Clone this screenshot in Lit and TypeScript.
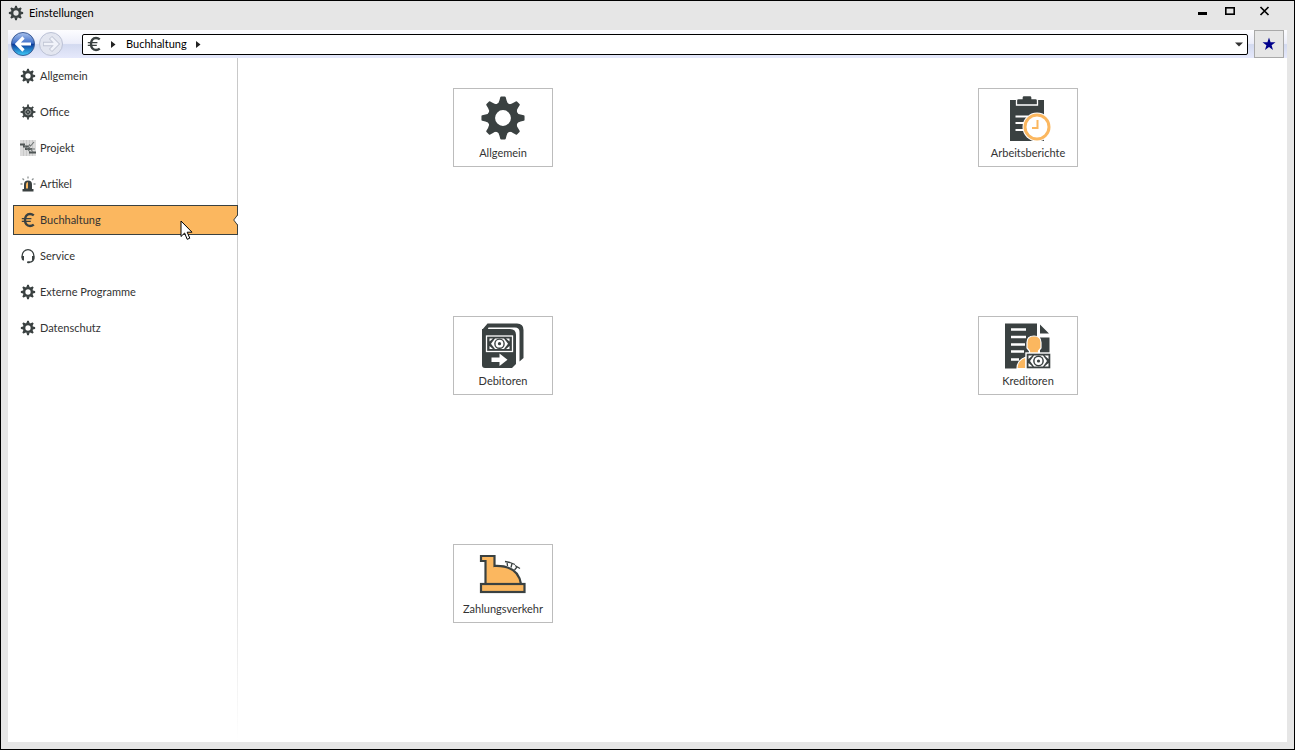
import { LitElement, html, css, svg } from "lit";
import { customElement, property, state } from "lit/decorators.js";

const angles = [0, 45, 90, 135, 180, 225, 270, 315];

const gear = svg`
  <circle r="11.8" fill="none" stroke="currentColor" stroke-width="7.4" />
  ${angles.map(
    (a) => svg`<path transform="rotate(${a})" fill="currentColor"
      d="M-7 -13.5Q-4 -15 -3.6 -18L-2.8 -21.2Q-2.6 -22 -1.8 -22H1.8Q2.6 -22 2.8 -21.2L3.6 -18Q4 -15 7 -13.5Z" />`
  )}`;

const euro = svg`
  <path d="M13.8 3.4Q12 2 10 2C6.800 2 5 4.400 5 8S6.800 14 10 14Q12 14 13.8 12.600" fill="none" stroke="currentColor" stroke-width="2.4" />
  <path d="M1.800 6.600H11.400M1.800 9.400H10.800" stroke="currentColor" stroke-width="1.4" />`;

const icons: Record<string, { box: string; art: unknown }> = {
  gear: { box: "-24.5 -24.5 49 49", art: gear },
  office: {
    box: "-8 -8 16 16",
    art: svg`
      ${angles.map((a) => svg`<path transform="rotate(${a})" d="M0 -4V-7.4" stroke="#3a4141" stroke-width="1.8" />`)}
      <circle r="5.6" fill="#3a4141" />
      <circle r="3" fill="none" stroke="#979c9c" stroke-width=".9" />
      <path d="M-2 -2L2 2M2 -2L-2 2" stroke="#858b8b" stroke-width=".8" />`,
  },
  projekt: {
    box: "0 0 16 16",
    art: svg`
      <rect width="16" height="16" fill="#dcdcdc" />
      <path d="M3.5 0V16M6.5 0V16M9.5 0V16M12.5 0V16" stroke="#c9c9c9" stroke-width="1" />
      <path d="M0 4.500H5M3 6.500H9M5 9H12M9 12.500H16" stroke="#4f5555" stroke-width="2" />
      <path d="M4 5L10 12M8 6L13 12M9 4.500L10.500 6L14 2M11 9H15" fill="none" stroke="#6f7575" stroke-width="1.1" />`,
  },
  artikel: {
    box: "0 0 16 16",
    art: svg`
      <path d="M4 13V8.500Q4 4.500 8 4.500T12 8.500V13Z" fill="#3a4141" />
      <path d="M6 12.500V8.600Q6 6.300 8 6V12.500Z" fill="#fbb75f" />
      <path d="M2.500 13H13.500V15.500H2.500Z" fill="#3a4141" />
      <path d="M8 .5V2.500M2.500 2.500L4 4M13.500 2.500L12 4M.5 8H2.500M13.500 8H15.500" stroke="#8d9292" stroke-width="1.300" />`,
  },
  euro: { box: "0 0 16 16", art: euro },
  service: {
    box: "0 0 16 16",
    art: svg`
      <path d="M2.200 10V7.500A5.800 5.800 0 0 1 13.800 7.500V10Q13.800 13.800 9 14.300" fill="none" stroke="#3a4141" stroke-width="1.300" />
      <path d="M1.600 8H4V12.500H3Q1.600 12.200 1.600 10.500ZM14.400 8H12V12.500H13Q14.400 12.200 14.400 10.500Z" fill="#3a4141" />
      <rect x="7" y="13.300" width="3" height="2" rx="1" fill="#3a4141" />`,
  },
  arbeit: {
    box: "0 0 48 48",
    art: svg`
      <path d="M6 6H40V47H6Z" fill="#3a4141" />
      <path d="M12.500 11V6.500Q12.500 4.500 14.500 4.500H18V3.500Q18 1.500 20 1.500H26Q28 1.500 28 3.500V4.500H31.500Q33.500 4.500 33.500 6.500V11Z" fill="#3a4141" stroke="#fff" stroke-width="1.300" />
      <path d="M14 0H32V3.800H28.700V3.200Q28.700 1 26.500 1H19.500Q17.300 1 17.300 3.200V3.800H14Z" fill="#fff" />
      <path d="M11.500 22.500H24M11.500 29H20M11.500 36H20" stroke="#fff" stroke-width="2" />
      <circle cx="33" cy="33" r="14.500" fill="#fff" />
      <circle cx="33" cy="33" r="12" fill="#fff" stroke="#fbb75f" stroke-width="3" />
      <path d="M33.500 26V34H28" fill="none" stroke="#fbb75f" stroke-width="2" />`,
  },
  debit: {
    box: "0 0 48 48",
    art: svg`
      <path d="M3 8L8.500 1.500H38Q44.500 1.500 44.500 8V36L40.500 39.500V10Q40.500 5.500 36 5.500H9.500L8.500 8Z" fill="#3a4141" />
      <path d="M3 7H31Q37 7 37 13V42L33 46H6Q3 46 3 43Z" fill="#3a4141" />
      <rect x="7.500" y="14" width="26" height="15.500" fill="#3a4141" stroke="#fff" stroke-width="1.300" />
      <path d="M10.500 16.500H14L10.500 19.500ZM30.500 16.500H27L30.500 19.500ZM10.500 27H14L10.500 24ZM30.500 27H27L30.500 24Z" fill="#fff" />
      <path d="M12 21.700L16 16.500H25L29 21.700L25 27H16Z" fill="#fff" />
      <circle cx="20.500" cy="21.700" r="5.300" fill="#3a4141" />
      <circle cx="20.500" cy="21.700" r="3.900" fill="#fff" />
      <circle cx="20.500" cy="21.700" r="1.600" fill="#3a4141" />
      <path d="M12.500 35.500H20.500V31.500L28.500 37.800L20.500 44V40H12.500Z" fill="#fff" />`,
  },
  kredit: {
    box: "0 0 48 48",
    art: svg`
      <path d="M1 1.500H33V46.500H1Z" fill="#3a4141" />
      <path d="M36 2.500L45 11.500H36ZM36 15.500H45.500V32H36Z" fill="#3a4141" />
      <path d="M7 7.500H22M7 15H22M7 22.500H21M7 29.500H20M7 37.500H15" stroke="#fff" stroke-width="2.600" />
      <path d="M13 46.500Q13 38 22 35V46.500Z" fill="#fbb75f" stroke="#fff" stroke-width="1.200" />
      <path d="M23 20.500Q23 14 30 14T37 20.500V26L34.500 29V34H25.500V29L23 26Z" fill="#fbb75f" stroke="#fff" stroke-width="1.200" />
      <rect x="22" y="31" width="25" height="16" fill="#3a4141" stroke="#fff" stroke-width="1.400" />
      <path d="M24.500 33.500H28.500L24.500 37ZM44.500 33.500H40.500L44.500 37ZM24.500 44.500H28.500L24.500 41ZM44.500 44.500H40.500L44.500 41Z" fill="#fff" />
      <path d="M26 39L30 33.500H39L43 39L39 44.500H30Z" fill="#fff" />
      <circle cx="34.500" cy="39" r="5.400" fill="#3a4141" />
      <circle cx="34.500" cy="39" r="3.900" fill="#fff" />
      <circle cx="34.500" cy="39" r="1.600" fill="#3a4141" />`,
  },
  kasse: {
    box: "0 0 48 48",
    art: svg`
      <path d="M2 6H15.500V16Q39 15 42 34H6.500V11H2Z" fill="#fbb75f" stroke="#3a4141" stroke-width="2.200" />
      <rect x="2" y="34" width="43.500" height="8" fill="#fbb75f" stroke="#3a4141" stroke-width="2.200" />
      <path d="M26 11.500L31 12.500M31 12.500L36 14.500M36 15.500L41 18.500M28 12L28.500 16M33 13.500L32 17.500M38 17L35.500 20" stroke="#3a4141" stroke-width="1.300" />`,
  },
};

const drawIcon = (name: string, cls: string) =>
  html`<svg class=${cls} viewBox=${icons[name].box} aria-hidden="true">${icons[name].art}</svg>`;

@customElement("settings-tile")
export class SettingsTile extends LitElement {
  @property() icon = "gear";
  @property() label = "";

  static styles = css`
    :host {
      display: block;
    }
    .tile {
      box-sizing: border-box;
      width: 100px;
      height: 79px;
      padding: 5px 0 0;
      display: flex;
      flex-direction: column;
      align-items: center;
      gap: 3px;
      border: 1px solid #bcbcbc;
      background: #fff;
      color: #3a4141;
      font: inherit;
    }
    .tile:hover {
      border-color: #3a4141;
    }
    .art {
      flex: none;
      width: 48px;
      height: 48px;
    }
    .caption {
      line-height: 16px;
      color: #333;
    }
  `;

  render() {
    return html`<button class="tile">${drawIcon(this.icon, "art")}<span class="caption">${this.label}</span></button>`;
  }
}

@customElement("app-root")
export class AppRoot extends LitElement {
  @state() private selected = "Buchhaltung";

  private sections = [
    ["gear", "Allgemein"],
    ["office", "Office"],
    ["projekt", "Projekt"],
    ["artikel", "Artikel"],
    ["euro", "Buchhaltung"],
    ["service", "Service"],
    ["gear", "Externe Programme"],
    ["gear", "Datenschutz"],
  ];

  private tiles = [
    ["gear", "Allgemein"],
    ["arbeit", "Arbeitsberichte"],
    ["debit", "Debitoren"],
    ["kredit", "Kreditoren"],
    ["kasse", "Zahlungsverkehr"],
  ];

  static styles = css`
    :host {
      display: block;
      height: 100vh;
      font: 11px/16px Lato, Carlito, "Open Sans", sans-serif;
      color: #333;
    }
    .window {
      box-sizing: border-box;
      position: relative;
      height: 100%;
      display: flex;
      flex-direction: column;
      padding: 0 7px 7px;
      border: 1px solid #000;
      background: #e6e6e6;
    }
    button {
      font: inherit;
      color: inherit;
      padding: 0;
      border: 0;
      background: none;
    }
    .titlebar {
      flex: none;
      height: 29px;
      display: flex;
      align-items: flex-start;
      color: #000;
    }
    .title {
      flex: 1;
      display: flex;
      align-items: center;
      gap: 5px;
      padding-top: 4px;
      margin: 0;
      font: inherit;
    }
    .icon {
      flex: none;
      width: 16px;
      height: 16px;
      color: #3a4141;
    }
    .controls {
      display: flex;
      gap: 7px;
      padding-right: 11px;
    }
    .control,
    .control svg {
      display: block;
      width: 24px;
      height: 22px;
    }
    .toolbar {
      flex: none;
      height: 28px;
      display: flex;
      align-items: center;
      background: linear-gradient(#fdfdff 0%, #eceefa 48%, #d3daf0 52%, #e2e6f9 90%, #e6e9fc 100%);
    }
    .travel {
      flex: none;
      display: flex;
      width: 60px;
      height: 28px;
      margin-right: 14px;
    }
    .travel button,
    .travel svg {
      display: block;
      width: 28px;
      height: 28px;
    }
    .travel button:first-child {
      margin-left: 1px;
    }
    .address {
      flex: 1;
      box-sizing: border-box;
      height: 21px;
      display: flex;
      align-items: center;
      padding: 0 3px;
      border: 1px solid #000;
      border-radius: 2px;
      background: #fff;
      color: #000;
    }
    .crumb {
      padding-bottom: 1px;
    }
    .crumb-arrow {
      flex: none;
      width: 5px;
      height: 7px;
      margin: 0 10px 0 9px;
    }
    .spacer {
      flex: 1;
    }
    .drop,
    .drop svg {
      display: block;
      width: 10px;
      height: 16px;
    }
    .favorite {
      box-sizing: border-box;
      width: 30px;
      height: 28px;
      margin: 0 3px 0 6px;
      border: 1px solid #a9a9a9;
      background: #e6e6e6;
    }
    .favorite svg {
      display: block;
      width: 14px;
      height: 14px;
      margin: auto;
    }
    .body {
      flex: 1;
      display: flex;
      min-height: 0;
      background: #fff;
    }
    .sidebar {
      flex: none;
      box-sizing: border-box;
      width: 230px;
      padding: 3px 0 0 5px;
      display: flex;
      flex-direction: column;
      gap: 6px;
      background: linear-gradient(#c8c8c8 0%, #d4d4d4 70%, #fff 100%) right / 1px 100% no-repeat;
    }
    .entry {
      box-sizing: border-box;
      height: 30px;
      display: flex;
      align-items: center;
      gap: 4px;
      padding: 0 0 0 6px;
      border: 1px solid transparent;
      text-align: left;
    }
    .entry.active {
      border-color: #3a4141;
      background: #fbb75f;
    }
    .notch {
      width: 5px;
      height: 10px;
      margin: 0 -1px 0 auto;
    }
    .content {
      flex: 1;
      display: grid;
      grid-template: repeat(3, 1fr) / repeat(2, 1fr);
      column-gap: 7px;
      padding-left: 6px;
      justify-items: center;
    }
    .content settings-tile {
      margin-top: 30px;
    }
    .cursor {
      position: absolute;
      left: 179px;
      top: 219px;
      width: 13px;
      height: 21px;
      pointer-events: none;
    }
  `;

  render() {
    const crumbArrow = html`<svg class="crumb-arrow" viewBox="0 0 5 7" aria-hidden="true"><path d="M0 0L4.500 3.500L0 7Z" fill="#222" /></svg>`;
    return html`
      <div class="window">
        <header class="titlebar">
          <h1 class="title">${drawIcon("gear", "icon")}Einstellungen</h1>
          <div class="controls">
            <button class="control" aria-label="Minimieren">
              <svg viewBox="0 0 24 22"><path d="M8 12.500H17" stroke="#000" stroke-width="3" /></svg>
            </button>
            <button class="control" aria-label="Maximieren">
              <svg viewBox="0 0 24 22"><rect x="4.800" y="6.800" width="8.400" height="6.400" fill="none" stroke="#000" stroke-width="1.600" /></svg>
            </button>
            <button class="control" aria-label="Schließen">
              <svg viewBox="0 0 24 22"><path d="M8.500 6L16.500 14M16.500 6L8.500 14" stroke="#000" stroke-width="1.700" /></svg>
            </button>
          </div>
        </header>
        <nav class="toolbar" aria-label="Navigation">
          <div class="travel">
            <button aria-label="Zurück">
              <svg viewBox="0 0 28 28">
                <defs>
                  <linearGradient id="blue" x2="0" y2="1">
                    <stop offset="0" stop-color="#a9c2ee" /><stop offset=".46" stop-color="#3f6fc8" />
                    <stop offset=".52" stop-color="#0b3c9c" /><stop offset="1" stop-color="#3fd0fb" />
                  </linearGradient>
                </defs>
                <circle cx="14" cy="14" r="11.500" fill="url(#blue)" stroke="#3c5c96" />
                <path d="M22 14H8M14.500 7.500L8 14L14.500 20.500" fill="none" stroke="#fff" stroke-width="3.200" />
              </svg>
            </button>
            <button aria-label="Vorwärts" disabled>
              <svg viewBox="0 0 28 28">
                <circle cx="14" cy="14" r="11.500" fill="#e3e6f0" stroke="#bcc2d6" />
                <path d="M6 14H20M13.500 7.500L20 14L13.500 20.500" fill="none" stroke="#bfc4d3" stroke-width="4.400" />
                <path d="M6.800 14H20M14 8L20 14L14 20" fill="none" stroke="#f1f3fa" stroke-width="2.700" />
              </svg>
            </button>
          </div>
          <div class="address">
            ${drawIcon("euro", "icon")}${crumbArrow}<span class="crumb">${this.selected}</span>${crumbArrow}
            <span class="spacer"></span>
            <button class="drop" aria-label="Verlauf">
              <svg viewBox="0 0 10 16"><path d="M1 6.500H9L5 10.500Z" fill="#333" /></svg>
            </button>
          </div>
          <button class="favorite" aria-label="Favorit">
            <svg viewBox="0 0 14 14"><path d="M7 .5L8.600 5.200H13.500L9.600 8.200L11 13L7 10.100L3 13L4.400 8.200L.5 5.200H5.400Z" fill="#00008b" /></svg>
          </button>
        </nav>
        <div class="body">
          <nav class="sidebar" aria-label="Bereiche">
            ${this.sections.map(
              ([icon, label]) => html`
                <button class="entry ${label === this.selected ? "active" : ""}" @click=${() => (this.selected = label)}>
                  ${drawIcon(icon, "icon")}<span>${label}</span>
                  ${label === this.selected
                    ? html`<svg class="notch" viewBox="0 0 5 10" aria-hidden="true"><path d="M5 0L.7 5L5 10Z" fill="#fff" /><path d="M4.500 0L.7 5L4.500 10" fill="none" stroke="#3a4141" /></svg>`
                    : ""}
                </button>`
            )}
          </nav>
          <main class="content">
            ${this.tiles.map(([icon, label]) => html`<settings-tile .icon=${icon} .label=${label}></settings-tile>`)}
          </main>
        </div>
        <svg class="cursor" viewBox="0 0 13 21" aria-hidden="true">
          <path d="M1 1V16.500L4.600 13L7.200 19.300L9.800 18.200L7.200 12.200H12Z" fill="#fff" stroke="#000" />
        </svg>
      </div>
    `;
  }
}
